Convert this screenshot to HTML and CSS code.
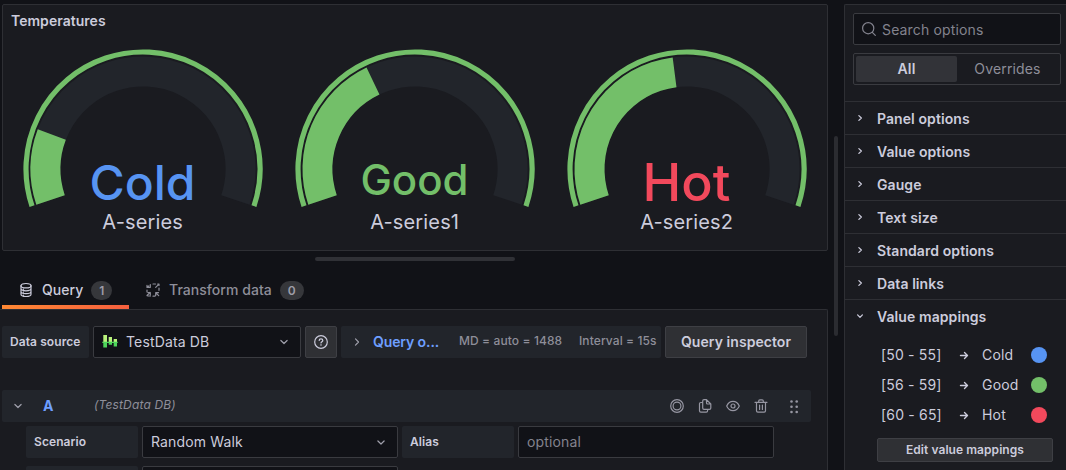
FILE: index.html
```html
<!DOCTYPE html>
<html lang="en">
<head>
<meta charset="utf-8">
<title>Temperatures - Edit panel</title>
<link rel="stylesheet" href="styles.css">
</head>
<body>
<div class="editor">
  <main class="main">
    <section class="panel">
      <h2 class="panel-title">Temperatures</h2>
      <div class="gauges">
        <svg class="gauge" viewBox="0 0 272 214">
          <circle class="ring" cx="136" cy="132" r="117" pathLength="360" transform="rotate(161.500 136 132)"/>
          <circle class="track" cx="136" cy="132" r="97.500" pathLength="360" transform="rotate(161.500 136 132)"/>
          <circle class="bar" cx="136" cy="132" r="97.500" pathLength="360" stroke-dasharray="39.200 360" transform="rotate(161.500 136 132)"/>
          <text class="value cold" x="135.500" y="162.500">Cold</text>
          <text class="series" x="135.700" y="192.300">A-series</text>
        </svg>
        <svg class="gauge" viewBox="0 0 272 214">
          <circle class="ring" cx="136" cy="132" r="117" pathLength="360" transform="rotate(161.500 136 132)"/>
          <circle class="track" cx="136" cy="132" r="97.500" pathLength="360" transform="rotate(161.500 136 132)"/>
          <circle class="bar" cx="136" cy="132" r="97.500" pathLength="360" stroke-dasharray="82.900 360" transform="rotate(161.500 136 132)"/>
          <text class="value good" x="135.500" y="157.500">Good</text>
          <text class="series" x="135.700" y="192.300">A-series1</text>
        </svg>
        <svg class="gauge" viewBox="0 0 272 214">
          <circle class="ring" cx="136" cy="132" r="117" pathLength="360" transform="rotate(161.500 136 132)"/>
          <circle class="track" cx="136" cy="132" r="97.500" pathLength="360" transform="rotate(161.500 136 132)"/>
          <circle class="bar" cx="136" cy="132" r="97.500" pathLength="360" stroke-dasharray="101.200 360" transform="rotate(161.500 136 132)"/>
          <text class="value hot" x="135.500" y="164.300">Hot</text>
          <text class="series" x="135.700" y="192.300">A-series2</text>
        </svg>
      </div>
    </section>
    <div class="h-handle"></div>
    <nav class="tabs">
      <a class="tab active">
        <svg class="icon" viewBox="0 0 16 16"><ellipse cx="8" cy="3.700" rx="5" ry="2.200"/><path d="M3 3.700v8.600c0 1.200 2.200 2.200 5 2.200s5-1 5-2.200V3.700M3 6.600c0 1.200 2.200 2.200 5 2.200s5-1 5-2.200M3 9.500c0 1.200 2.200 2.200 5 2.200s5-1 5-2.200M5.300 7.200v.1M5.300 10.100v.1M5.300 13v.1"/></svg>
        <span>Query</span><span class="counter">1</span>
      </a>
      <a class="tab second">
        <svg class="icon transform" viewBox="0 0 16 16"><path d="M2 5.500V3.300M5.300 2.500v2.800H2.500M2.300 5.300l1.500-1.500M8 2h2.500M12.700 2H14v1.500M10.700 5.300l2.500-2.500M14 6v2.300M13.500 10.700h-2.800v2.800M11 11l2.700 2.700M10 14.200H8M5.500 14H3M2 13.500l3-3M3 10.500h2.300v2.300M2 10V8"/></svg>
        <span>Transform data</span><span class="counter">0</span>
      </a>
    </nav>
    <section class="query-pane">
      <div class="source-row">
        <label class="label source-label">Data source</label>
        <div class="select source-select">
          <svg class="db-logo" viewBox="0 0 16 14"><path class="lime" d="M1.300 0h3.700v7H1.300zM6.700 2h3.300v5H6.700zM11.700 4H15v3h-3.300z"/><path class="leaf" d="M1.300 7h3.700v5.500H1.300zM6.700 7H10v2.800H6.700zM11.700 7H15v4.500h-3.300zM.3 6.700h15.400v1.200H.3z"/></svg>
          <span class="grow">TestData DB</span>
          <svg class="icon chevron" viewBox="0 0 16 16"><path d="M4.900 6.500 8 9.500l3.100-3"/></svg>
        </div>
        <button class="help"><svg class="icon" viewBox="0 0 16 16"><circle cx="8" cy="8" r="6.300"/><path d="M6.200 6.500c0-1 .8-1.700 1.800-1.700s1.800.7 1.800 1.600c0 1.200-1.800 1.300-1.800 2.500M8 10.700v.5"/></svg></button>
        <div class="query-options">
          <svg class="icon chevron" viewBox="0 0 16 16"><path d="m6.500 4.900 3 3.100-3 3.100"/></svg>
          <span class="link">Query o...</span>
          <span class="meta md">MD = auto = 1488</span>
          <span class="meta">Interval = 15s</span>
        </div>
        <button class="button inspector">Query inspector</button>
      </div>
      <div class="query-head">
        <svg class="icon chevron" viewBox="0 0 16 16"><path d="M4.900 6.500 8 9.500l3.100-3"/></svg>
        <span class="ref">A</span>
        <em class="ds-name">(TestData DB)</em>
        <div class="actions">
          <svg class="icon" viewBox="0 0 16 16"><circle cx="8" cy="8" r="6.300"/><circle cx="8" cy="8" r="3.900"/></svg>
          <svg class="icon" viewBox="0 0 16 16"><path d="M9.500 1.700H7c-.8 0-1.300.5-1.300 1.300v7c0 .8.500 1.300 1.300 1.300h5.500c.8 0 1.300-.5 1.300-1.300V6zM9.500 1.700V5c0 .6.400 1 1 1h3.300M5.700 4.500H3.800c-.8 0-1.300.5-1.300 1.300v7c0 .8.500 1.400 1.300 1.400h5.500c.8 0 1.300-.5 1.300-1.400v-1.500"/></svg>
          <svg class="icon" viewBox="0 0 16 16"><path d="M1.700 8C3 5 5.300 3.300 8 3.300S13 5 14.300 8C13 11 10.700 12.700 8 12.700S3 11 1.700 8z"/><circle cx="8" cy="8" r="2"/></svg>
          <svg class="icon" viewBox="0 0 16 16"><path d="M2 4.300h12M5.700 4.300V3c0-.7.500-1.200 1.200-1.200h2.200c.7 0 1.200.5 1.200 1.200v1.300M3.500 4.300v8.400c0 .8.600 1.400 1.400 1.400h6.200c.8 0 1.400-.6 1.400-1.400V4.300M6.600 7v4.500M9.400 7v4.500"/></svg>
          <svg class="icon grip" viewBox="0 0 16 16"><circle cx="5.500" cy="3.500" r="1.300"/><circle cx="10.700" cy="3.500" r="1.300"/><circle cx="5.500" cy="8.800" r="1.300"/><circle cx="10.700" cy="8.800" r="1.300"/><circle cx="5.500" cy="14" r="1.300"/><circle cx="10.700" cy="14" r="1.300"/></svg>
        </div>
      </div>
      <div class="fields">
        <label class="label">Scenario</label>
        <div class="select"><span class="grow">Random Walk</span><svg class="icon chevron" viewBox="0 0 16 16"><path d="M4.900 7 8 10l3.100-3"/></svg></div>
        <label class="label">Alias</label>
        <div class="select placeholder">optional</div>
        <div class="label"></div>
        <div class="select"></div>
      </div>
    </section>
  </main>
  <div class="gutter"><div class="v-handle"></div></div>
  <aside class="options">
    <div class="search">
      <svg class="icon" viewBox="0 0 16 16"><circle cx="7.200" cy="7.200" r="5.600"/><path d="m11.300 11.300 3 3"/></svg>
      <span>Search options</span>
    </div>
    <div class="radio"><span class="on">All</span><span>Overrides</span></div>
    <div class="group"><svg class="icon" viewBox="0 0 16 16"><path d="m6.500 4.800 3.300 3.200-3.300 3.200"/></svg>Panel options</div>
    <div class="group"><svg class="icon" viewBox="0 0 16 16"><path d="m6.500 4.800 3.300 3.200-3.300 3.200"/></svg>Value options</div>
    <div class="group"><svg class="icon" viewBox="0 0 16 16"><path d="m6.500 4.800 3.300 3.200-3.300 3.200"/></svg>Gauge</div>
    <div class="group"><svg class="icon" viewBox="0 0 16 16"><path d="m6.500 4.800 3.300 3.200-3.300 3.200"/></svg>Text size</div>
    <div class="group"><svg class="icon" viewBox="0 0 16 16"><path d="m6.500 4.800 3.300 3.200-3.300 3.200"/></svg>Standard options</div>
    <div class="group"><svg class="icon" viewBox="0 0 16 16"><path d="m6.500 4.800 3.300 3.200-3.300 3.200"/></svg>Data links</div>
    <div class="group"><svg class="icon" viewBox="0 0 16 16"><path d="m4.800 6.500 3.200 3.300 3.200-3.300"/></svg>Value mappings</div>
    <div class="mappings">
      <div class="mapping"><span>[50 - 55]</span><svg class="arrow" viewBox="0 0 10 10"><path d="M1.500 5.500h7M5.500 2.500l3 3-3 3"/></svg><span>Cold</span><i class="dot blue"></i></div>
      <div class="mapping"><span>[56 - 59]</span><svg class="arrow" viewBox="0 0 10 10"><path d="M1.500 5.500h7M5.500 2.500l3 3-3 3"/></svg><span>Good</span><i class="dot green"></i></div>
      <div class="mapping"><span>[60 - 65]</span><svg class="arrow" viewBox="0 0 10 10"><path d="M1.500 5.500h7M5.500 2.500l3 3-3 3"/></svg><span>Hot</span><i class="dot red"></i></div>
    </div>
    <button class="button edit">Edit value mappings</button>
  </aside>
</div>
</body>
</html>
```

FILE: styles.css
```css
* { box-sizing: border-box; }
body {
  margin: 0;
  height: 470px;
  overflow: hidden;
  background: #111217;
  color: #ccccdc;
  font: 400 14px/22px Inter, "Liberation Sans", sans-serif;
  letter-spacing: 0.15px;
}
.icon {
  flex: none;
  width: 16px;
  height: 16px;
  fill: none;
  stroke: currentColor;
  stroke-width: 1.2;
  stroke-linecap: round;
  stroke-linejoin: round;
}
.editor { display: flex; height: 470px; padding-top: 4px; }
.main { width: 828px; flex: none; display: flex; flex-direction: column; }
.panel {
  height: 247px;
  flex: none;
  margin-left: 2px;
  background: #1a1b20;
  border: 1px solid #2e2f34;
  border-radius: 2px;
}
.panel-title { margin: 0; height: 32px; padding: 5px 8px; font-size: 14px; font-weight: 600; letter-spacing: 0.03px; }
.gauges { display: flex; padding-left: 3.5px; }
.gauge { display: block; width: 272px; height: 214px; }
.ring, .track, .bar { fill: none; }
.ring { stroke: #73bf69; stroke-width: 5.2; stroke-dasharray: 217 360; }
.track { stroke: #22252b; stroke-width: 30; stroke-dasharray: 217 360; }
.bar { stroke: #73bf69; stroke-width: 30; }
.value { font-weight: 500; text-anchor: middle; letter-spacing: 0; }
.series { font-size: 20px; fill: #ccccdc; text-anchor: middle; }
.cold { fill: #5794f2; font-size: 48px; }
.good { fill: #73bf69; font-size: 42px; }
.hot { fill: #f2495c; font-size: 52px; }
.h-handle { flex: none; width: 200px; height: 4px; margin: 6px 0 0 315px; border-radius: 2px; background: #303136; }

.tabs { display: flex; height: 48px; flex: none; padding: 10px 0 0 2px; }
.tab { display: flex; align-items: center; height: 38px; padding: 0 16px; color: #8e8e99; font-weight: 500; letter-spacing: 0.05px; }
.tab.active {
  width: 127px;
  color: #ccccdc;
  background: linear-gradient(90deg, #ff8833, #f55f3e) bottom / 100% 4px no-repeat;
}
.tab .icon { margin-right: 8px; }
.counter {
  margin-left: 8px;
  padding: 0 8px;
  height: 19px;
  border-radius: 10px;
  background: #36373b;
  color: #9d9da8;
  font-size: 12px;
  font-weight: 600;
  line-height: 19px;
}
.query-pane {
  flex: 1;
  min-height: 0;
  overflow: hidden;
  padding: 16px 0 0 2px;
  background: #1a1b20;
  border-top: 1px solid #2e2f34;
  border-right: 1px solid #2e2f34;
  border-radius: 0 2px 0 0;
}
.source-row { display: flex; gap: 4px; height: 32px; }
.label {
  height: 32px;
  padding: 0 8px;
  border-radius: 2px;
  background: #22252b;
  font-size: 12px;
  font-weight: 600;
  letter-spacing: 0.08px;
  line-height: 32px;
}
.source-label { width: 87px; }
.select {
  display: flex;
  align-items: center;
  height: 32px;
  padding: 0 8px;
  background: #111217;
  border: 1px solid #3a3b40;
  border-radius: 2px;
}
.source-select { width: 208px; }
.grow { flex: 1; }
.chevron { color: #a0a0ac; }
.db-logo { width: 16px; height: 14px; margin-right: 8px; }
.lime { fill: #b9f27c; }
.leaf { fill: #4fd65c; }
.placeholder { color: #83838e; }
button { font: inherit; letter-spacing: inherit; color: inherit; padding: 0; }
.help, .button { display: flex; align-items: center; justify-content: center; background: #2f3034; border: 1px solid #3e3f44; border-radius: 2px; font-weight: 600; letter-spacing: 0.06px; }
.help { width: 32px; }
.query-options { display: flex; align-items: center; width: 320px; padding-left: 8px; background: #22252b; border-radius: 2px; white-space: nowrap; }
.link { color: #6e9fff; font-weight: 600; letter-spacing: -0.1px; margin-left: 8px; width: 86px; }
.meta { color: #8e8e99; font-size: 12px; font-weight: 500; padding-bottom: 3px; letter-spacing: 0.1px; }
.md { width: 120px; }
.inspector { width: 142px; }
.query-head { display: flex; align-items: center; width: 809px; height: 32px; margin-top: 32px; padding: 0 9px 0 8px; background: #22252b; border-radius: 2px; }
.ref { width: 51px; margin-left: 17px; color: #6e9fff; font-weight: 700; }
.ds-name { flex: 1; color: #8e8e99; font-size: 12px; padding-bottom: 2px; }
.actions { display: flex; gap: 12px; color: #9696a2; }
.grip { margin-left: 5px; }
.grip circle { fill: currentColor; stroke: none; }
.fields { display: grid; grid-template-columns: 112px 256px 112px 256px; gap: 8px 4px; margin: 4px 0 0 24px; }

.gutter { width: 17px; flex: none; padding: 132px 0 0 6px; }
.v-handle { width: 4px; height: 200px; border-radius: 2px; background: #2b2c31; }
.options { flex: 1; margin-left: -1px; background: #1a1b20; border-top: 1px solid #2e2f34; border-left: 1px solid #2e2f34; border-radius: 2px 0 0 0; }
.search { display: flex; align-items: center; gap: 5px; width: 208px; height: 32px; margin: 8px 0 0 8px; padding: 1px 7px 0; background: #111217; border: 1px solid #3a3b40; border-radius: 2px; color: #83838e; }
.search .icon { margin-top: -2px; }
.radio { display: flex; width: 208px; height: 32px; margin: 8px 0 16px 8px; padding: 2px; border: 1px solid #3a3b40; border-radius: 2px; color: #8e8e99; text-align: center; }
.radio span { flex: 1; line-height: 26px; border-radius: 2px; }
.radio .on { background: #323338; color: #ccccdc; font-weight: 600; }
.group { display: flex; align-items: center; height: 33px; border-top: 1px solid #2e2f34; padding: 2px 0 0 9px; font-weight: 600; letter-spacing: 0.08px; }
.group .icon { width: 12px; height: 12px; margin: -2px 11px 0 0; stroke-width: 1.7; }
.mappings { padding: 8px 0 0 36px; }
.mapping { display: grid; grid-template-columns: 78px 23px 49px 16px; align-items: center; height: 30px; letter-spacing: 0.18px; }
.arrow { width: 10px; height: 10px; fill: none; stroke: currentColor; stroke-width: 1.4; stroke-linecap: round; stroke-linejoin: round; }
.dot { width: 16px; height: 16px; border-radius: 50%; }
.blue { background: #5794f2; }
.green { background: #73bf69; }
.red { background: #f2495c; }
.edit { width: 176px; height: 24px; margin: 8px 0 0 32px; font-size: 12px; }
```
